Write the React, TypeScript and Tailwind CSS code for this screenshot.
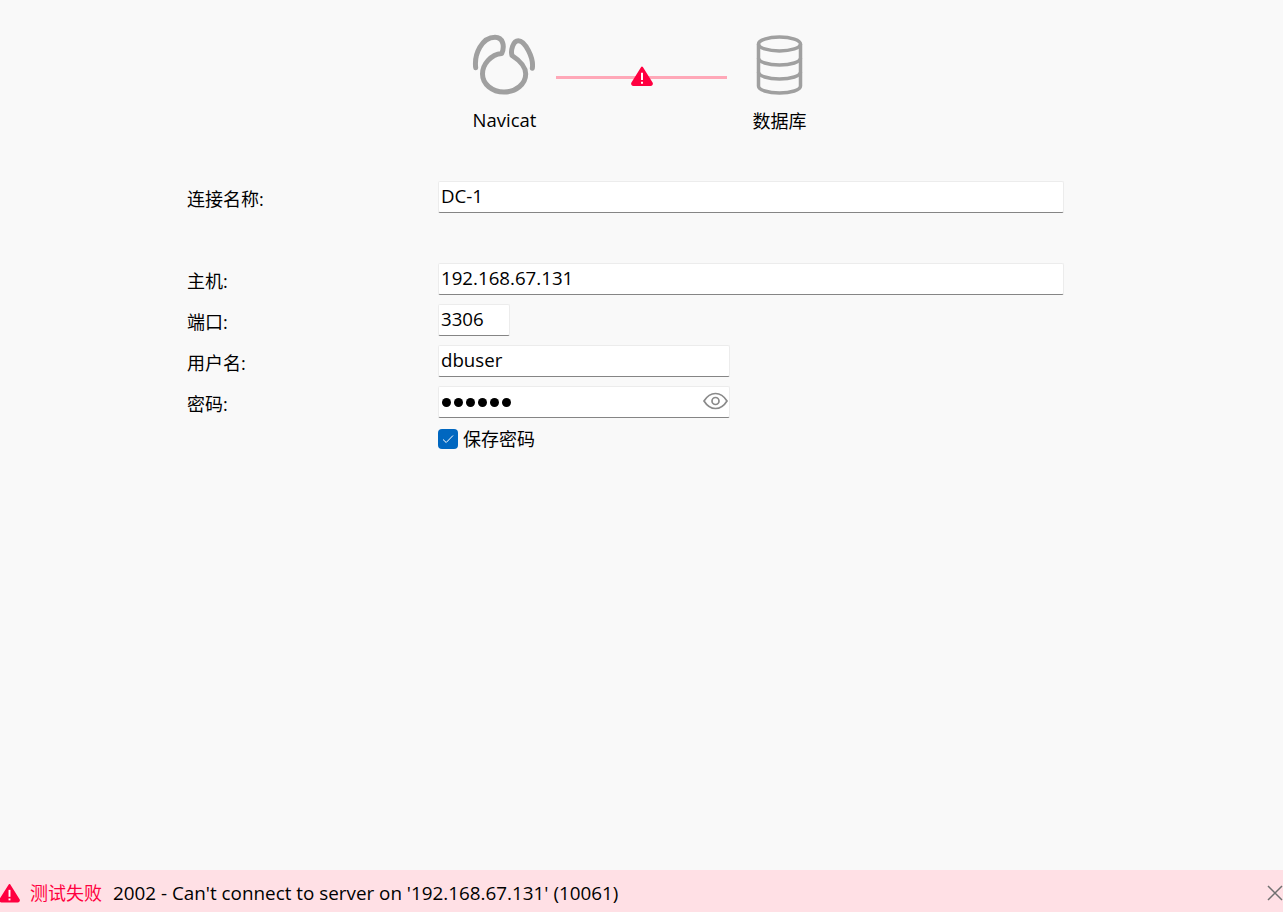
// App.tsx

const fontStack = "font-['Open_Sans','Noto_Sans_CJK_SC',sans-serif]";

const NavicatIcon = () => (
  <svg width="65" height="63" viewBox="0 0 65 63" fill="none" stroke="#a0a0a0" strokeWidth="5" strokeLinecap="round" strokeLinejoin="round">
    <path d="M3.700 33.700C2 20 10 3.300 23 3.300c8 0 10 8.700 6.700 16.200C19 20.500 10.500 30 10.500 40c0 10 9.500 18 21.500 18s21.700-8 21.700-18c0-8-6.700-14-13.700-18.500-1.500-5 1-14.800 6.300-14.800 6.700 0 15.700 17.300 14 27.600" />
  </svg>
);

const DatabaseIcon = () => (
  <svg width="47" height="60" viewBox="0 0 47 60" fill="none" stroke="#a0a0a0" strokeWidth="3.500">
    <ellipse cx="23.500" cy="9" rx="21" ry="7" />
    <path d="M2.500 9v42c0 4 9.500 7 21 7s21-3 21-7V9" />
    <path d="M2.500 23c0 4 9.500 7 21 7s21-3 21-7" />
    <path d="M2.500 37c0 4 9.500 7 21 7s21-3 21-7" />
  </svg>
);

const WarningIcon = ({ className }: { className: string }) => (
  <svg className={className} viewBox="0 0 22 20" fill="none">
    <path d="M11 1.500 20.700 17c.5 1-.2 2-1.200 2h-17c-1 0-1.700-1-1.200-2z" fill="#ff0040" stroke="#ff0040" strokeWidth="2" strokeLinejoin="round" />
    <path d="M11 6.700V14" stroke="#fff" strokeWidth="2" />
    <path d="M11 15.700v2" stroke="#fff" strokeWidth="2" />
  </svg>
);

const TextField = ({ value, width }: { value: string; width: string }) => (
  <div className={`flex h-8 items-center rounded-[2px] border border-[#ececec] border-b-[#858585] bg-white pb-[2px] pl-[2px] ${width}`}>
    <input
      readOnly
      type="text"
      value={value}
      className="w-full bg-transparent text-[18.7px] text-black outline-none"
    />
  </div>
);

const PasswordField = ({ length }: { length: number }) => (
  <div className="relative flex h-8 w-[292px] items-center gap-[3px] rounded-[2px] border border-[#ececec] border-b-[#858585] bg-white pl-[3px]">
    {Array.from({ length }, (_, i) => (
      <span key={i} className="h-[9px] w-[9px] rounded-full bg-black" />
    ))}
    <svg className="absolute right-[1px] top-[4px]" width="25" height="20" viewBox="0 0 25 20" fill="none" stroke="#8a8a8a" strokeWidth="1.700">
      <path d="M1 10c3-4.800 7-7.500 11.500-7.500S21 5.200 24 10c-3 4.800-7 7.500-11.500 7.500S4 14.800 1 10z" />
      <circle cx="12.500" cy="10" r="3.500" />
    </svg>
  </div>
);

const FormRow = ({ label, children }: { label: string; children: React.ReactNode }) => (
  <div className="flex h-8">
    <label className="w-[251px] text-[18px] leading-[36px] text-black">{label}</label>
    {children}
  </div>
);

const App = () => {
  return (
    <div className={`flex h-[912px] flex-col bg-[#f9f9f9] ${fontStack}`}>
      <div className="flex-1">
        <div className="flex pl-[472px] pt-[34px]">
          <div className="flex w-[65px] flex-col items-center">
            <NavicatIcon />
            <span className="mt-[8px] text-[18.5px] leading-[30px] text-black">Navicat</span>
          </div>
          <div className="relative ml-[19px] mt-[42px] h-[3px] w-[171px] bg-[#ffa8b8]">
            <WarningIcon className="absolute left-[75px] top-[-10px] h-[20px] w-[22px]" />
          </div>
          <div className="ml-[25px] flex w-[55px] flex-col items-center">
            <div className="pt-[1px]">
              <DatabaseIcon />
            </div>
            <span className="mt-[11px] text-[18px] leading-[30px] text-black">数据库</span>
          </div>
        </div>

        <div className="pl-[187px] pt-[45px]">
          <FormRow label="连接名称:">
            <TextField value="DC-1" width="w-[626px]" />
          </FormRow>

          <div className="mt-[50px] flex flex-col gap-[9px]">
            <FormRow label="主机:">
              <TextField value="192.168.67.131" width="w-[626px]" />
            </FormRow>
            <FormRow label="端口:">
              <TextField value="3306" width="w-[72px]" />
            </FormRow>
            <FormRow label="用户名:">
              <TextField value="dbuser" width="w-[292px]" />
            </FormRow>
            <FormRow label="密码:">
              <PasswordField length={6} />
            </FormRow>
          </div>

          <div className="ml-[251px] mt-[11px] flex items-center gap-[5px]">
            <div className="flex h-5 w-5 items-center justify-center rounded-[4px] bg-[#0067c0]">
              <svg width="12" height="10" viewBox="0 0 12 10" fill="none" stroke="#fff" strokeWidth="1">
                <path d="M1 5.500 4.200 8.500 11 1.500" />
              </svg>
            </div>
            <span className="text-[18px] leading-[20px] text-black">保存密码</span>
          </div>
        </div>
      </div>

      <div className="flex h-[42px] items-center bg-[#ffe0e5] pt-[4px]">
        <WarningIcon className="ml-[-1px] h-[20px] w-[21px]" />
        <span className="ml-[10px] text-[18px] text-[#ff0040]">测试失败</span>
        <span className="ml-[11px] text-[18.85px] text-black">2002 - Can't connect to server on '192.168.67.131' (10061)</span>
        <svg className="ml-auto" width="16" height="16" viewBox="0 0 16 16" fill="none" stroke="#707070" strokeWidth="1.500">
          <path d="M1 1l14 14M15 1 1 15" />
        </svg>
      </div>
    </div>
  );
};

export default App;
